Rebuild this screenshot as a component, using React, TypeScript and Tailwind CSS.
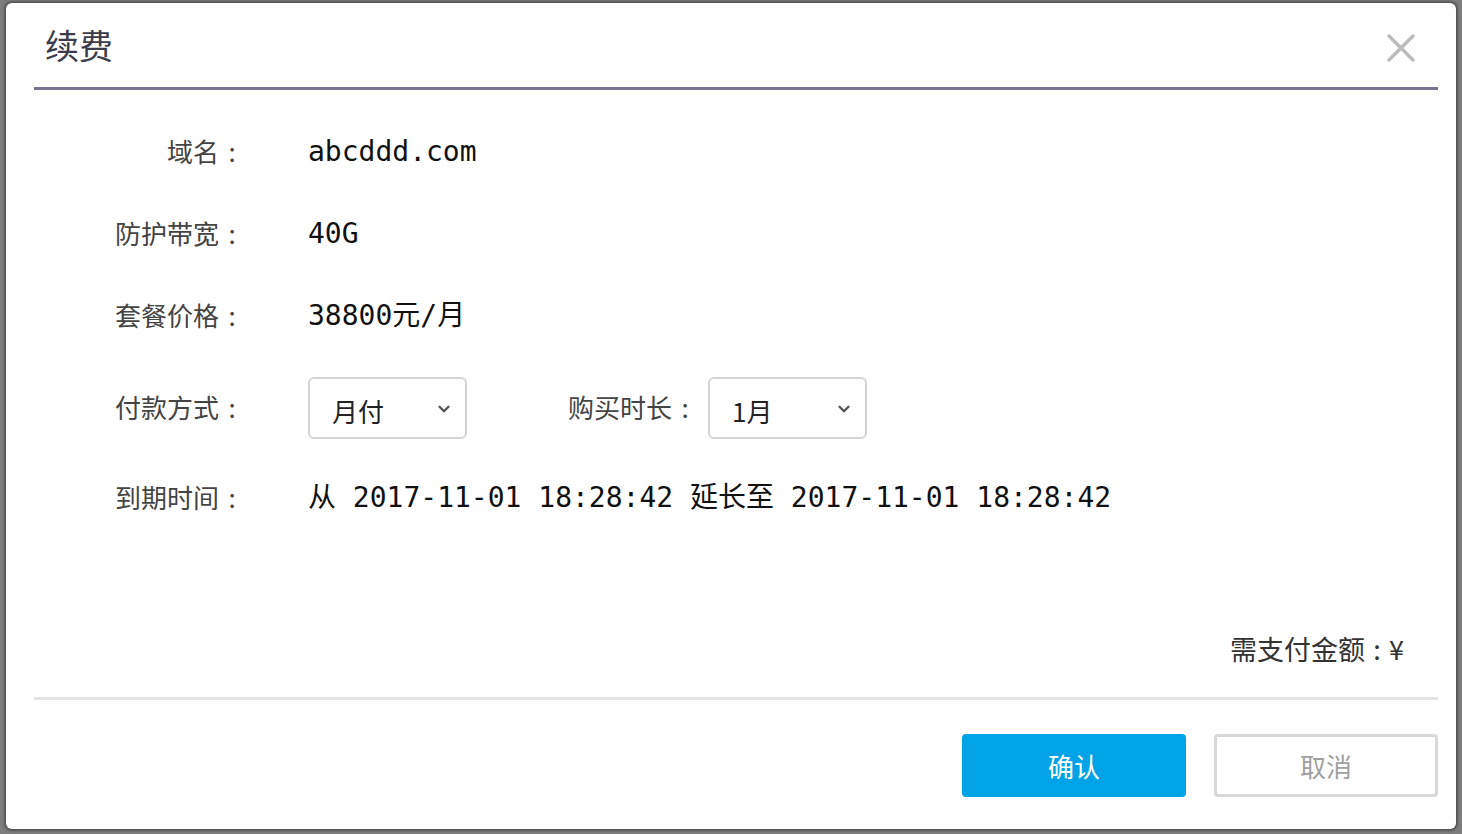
import { ChevronDown } from 'lucide-react';

const sans = "font-['Noto_Sans_CJK_SC',sans-serif]";
const mono = "font-['DejaVu_Sans_Mono','Noto_Sans_CJK_SC',monospace]";

function Label({ text, className = '' }: { text: string; className?: string }) {
  return (
    <div className={`flex items-center justify-end text-[26px] text-[#444] ${sans} ${className}`}>
      <span>{text}</span>
      <span className="w-[26px] text-center">:</span>
    </div>
  );
}

function Row({ label, h, children }: { label: string; h: string; children: React.ReactNode }) {
  return (
    <div className={`flex items-center ${h}`}>
      <Label text={label} className="w-[239px] shrink-0 mt-[-3px]" />
      <div className="ml-[63px] flex items-center">{children}</div>
    </div>
  );
}

function Select({ value }: { value: string }) {
  return (
    <div className="w-[159px] h-[62px] rounded-[6px] border-2 border-[#d4d4d4] flex items-center justify-between pl-[22px] pr-[12px]">
      <span className={`text-[26px] text-[#222] ${sans} mt-[4px]`}>{value}</span>
      <ChevronDown size={18} strokeWidth={3.2} className="text-[#555] mt-[2px]" />
    </div>
  );
}

export default function App() {
  return (
    <div className="w-[1462px] h-[834px] bg-[#7d7d7d] pt-[3px] pl-[6px] overflow-hidden">
      <div className="w-[1450px] h-[826px] bg-white rounded-[6px] shadow-[0_0_2px_2px_rgba(60,60,60,0.6)] flex flex-col">
        {/* Header */}
        <div className="ml-[28px] mr-[18px] h-[87px] border-b-[3px] border-[#767490] flex items-center justify-between pl-[11px] pr-[22px] shrink-0">
          <h1 className={`text-[34px] text-[#3c3c4a] ${sans} mt-[-1px]`}>续费</h1>
          <svg width="30" height="30" viewBox="0 0 30 30" className="mt-[6px]">
            <path d="M3 3 L27 27 M27 3 L3 27" stroke="#bcbcbc" strokeWidth="3.5" strokeLinecap="round" />
          </svg>
        </div>

        {/* Body */}
        <div className="pt-[21px] shrink-0">
          <Row label="域名" h="h-[82px]">
            <span className={`text-[28px] text-[#111] ${mono}`}>abcddd.com</span>
          </Row>
          <Row label="防护带宽" h="h-[82px]">
            <span className={`text-[28px] text-[#111] ${mono}`}>40G</span>
          </Row>
          <Row label="套餐价格" h="h-[82px]">
            <span className={`text-[28px] text-[#111] ${mono}`}>38800元/月</span>
          </Row>
          <Row label="付款方式" h="h-[102px]">
            <Select value="月付" />
            <Label text="购买时长" className="ml-[101px] mr-[10px] mt-[-3px]" />
            <Select value="1月" />
          </Row>
          <Row label="到期时间" h="h-[78px]">
            <span className={`text-[28px] text-[#111] ${mono} whitespace-pre`}>从 2017-11-01 18:28:42 延长至 2017-11-01 18:28:42</span>
          </Row>
        </div>

        {/* Amount */}
        <div className="ml-[28px] mr-[18px] flex-1 flex items-end justify-end pr-[34px] pb-[28px] border-b-[3px] border-[#e5e5e5]">
          <div className={`flex items-center text-[27px] text-[#333] ${sans}`}>
            <span>需支付金额</span>
            <span className="w-[24px] text-center">:</span>
            <span>¥</span>
          </div>
        </div>

        {/* Footer */}
        <div className="ml-[28px] mr-[18px] h-[129px] shrink-0 flex items-start justify-end pt-[34px] gap-[28px]">
          <button className={`w-[224px] h-[63px] rounded-[4px] bg-[#00a4e6] text-white text-[26px] ${sans}`}>确认</button>
          <button className={`w-[224px] h-[63px] rounded-[4px] border-[3px] border-[#d8d8d8] bg-white text-[#a0a0a0] text-[26px] ${sans}`}>取消</button>
        </div>
      </div>
    </div>
  );
}
